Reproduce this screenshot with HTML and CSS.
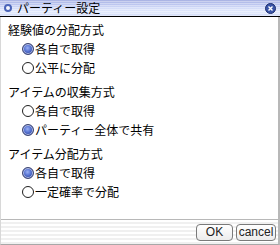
FILE: index.html
```
<!DOCTYPE html>
<html lang="ja">
<head>
<meta charset="utf-8">
<link rel="stylesheet" href="styles.css">
</head>
<body>
<div class="window">
  <div class="titlebar">
    <span class="ticon"></span>
    <span class="title">パーティー設定</span>
    <span class="close"><svg width="11" height="11" viewBox="0 0 11 11"><circle cx="5.5" cy="5.5" r="5" fill="#3a55a8" stroke="#1e2f6e" stroke-width="1"/><path d="M3.5 3.5 L7.5 7.5 M7.5 3.5 L3.5 7.5" stroke="#fff" stroke-width="1.4"/></svg></span>
  </div>
  <div class="content">
    <div class="group">
      <div class="heading">経験値の分配方式</div>
      <div class="opt"><span class="radio on"></span>各自で取得</div>
      <div class="opt"><span class="radio"></span>公平に分配</div>
    </div>
    <div class="group">
      <div class="heading">アイテムの収集方式</div>
      <div class="opt"><span class="radio"></span>各自で取得</div>
      <div class="opt"><span class="radio on"></span>パーティー全体で共有</div>
    </div>
    <div class="group">
      <div class="heading">アイテム分配方式</div>
      <div class="opt"><span class="radio on"></span>各自で取得</div>
      <div class="opt"><span class="radio"></span>一定確率で分配</div>
    </div>
  </div>
  <div class="footer">
    <span class="btn ok">OK</span>
    <span class="btn cancel">cancel</span>
  </div>
</div>
</body>
</html>
```
FILE: styles.css
```
html, body {
  margin: 0;
  padding: 0;
  background: #ffffff;
}
.window {
  width: 280px;
  height: 245px;
  box-sizing: border-box;
  display: flex;
  flex-direction: column;
  border-left: 1px solid #d8d8d8;
  border-right: 2px solid #b8b8b8;
  border-bottom: 1px solid #a8a8a8;
  font-family: "Noto Sans CJK JP", "Liberation Sans", sans-serif;
  font-size: 12px;
  color: #000;
}
.titlebar {
  height: 16px;
  margin-left: -1px;
  margin-right: -2px;
  border-bottom: 1px solid #000;
  display: flex;
  align-items: center;
  background:
    repeating-linear-gradient(to bottom, rgba(255,255,255,0) 0px, rgba(255,255,255,0) 1px, rgba(255,255,255,0.35) 1px, rgba(255,255,255,0.35) 2px),
    linear-gradient(to bottom, #a9b3e3 0px, #b9c3ee 4px, #d3dcf8 8px, #e2eafc 12px, #cfd9f6 16px);
}
.ticon {
  width: 8px;
  height: 8px;
  margin-left: 4px;
  border-radius: 50%;
  background: #f4f6ff;
  border: 2px solid #4a64b8;
  box-sizing: border-box;
}
.title {
  margin-left: 5px;
  line-height: 16px;
  flex: 1;
}
.close {
  width: 11px;
  height: 11px;
  margin-right: 4px;
  display: flex;
}
.content {
  flex: 1;
  padding: 3px 0 0 7px;
  display: flex;
  flex-direction: column;
  gap: 5px;
}
.heading, .opt {
  height: 19px;
  line-height: 19px;
  white-space: nowrap;
}
.opt {
  display: flex;
  align-items: center;
  padding-left: 14px;
}
.radio {
  width: 12px;
  height: 12px;
  box-sizing: border-box;
  border-radius: 50%;
  border: 1px solid #202020;
  background: #fff;
  margin-right: 1px;
}
.radio.on {
  border: 1px solid #3a4270;
  background: radial-gradient(circle at 45% 40%, #9bb0f2 0px, #5d79d6 3px, #3f59b6 5px);
  box-shadow: inset 0 0 0 1px #b8c2e6;
}
.footer {
  height: 25px;
  border-top: 1px solid #b8b8b8;
  box-sizing: border-box;
  display: flex;
  align-items: center;
  justify-content: flex-end;
  gap: 3px;
  padding-right: 2px;
  background: repeating-linear-gradient(to bottom, #ffffff 0px, #ffffff 2px, #f0f0f0 2px, #f0f0f0 4px);
}
.btn {
  height: 17px;
  line-height: 15px;
  box-sizing: border-box;
  border: 1px solid #7a7a7a;
  border-radius: 4px;
  background: linear-gradient(to bottom, #ffffff, #ececec);
  font-family: "Liberation Sans", sans-serif;
  font-size: 12px;
  text-align: center;
  color: #222;
}
.btn.ok {
  width: 37px;
}
.btn.cancel {
  width: 40px;
}
```
